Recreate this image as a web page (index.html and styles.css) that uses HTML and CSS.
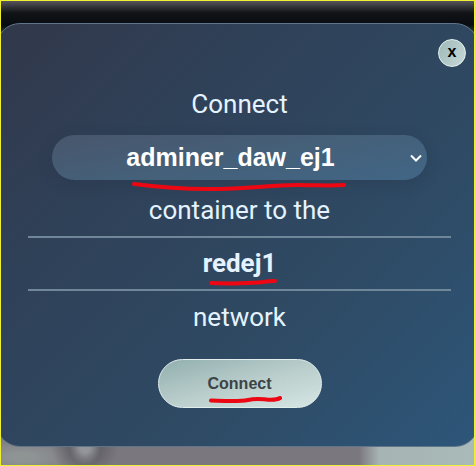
FILE: index.html
```html
<!DOCTYPE html>
<html lang="en">
<head>
<meta charset="utf-8">
<meta name="viewport" content="width=device-width, initial-scale=1">
<title>Connect container</title>
<link rel="stylesheet" href="styles.css">
</head>
<body>
<div class="page">
  <form class="modal" role="dialog" aria-label="Connect container to network">
    <button class="close" type="button" aria-label="Close">x</button>
    <label class="row" for="container">Connect</label>
    <div class="picker">
      <select class="select" id="container">
        <option>adminer_daw_ej1</option>
      </select>
      <svg class="chevron" viewBox="0 0 12 8"><path d="M1 1.5 6 6.5 11 1.5"/></svg>
      <svg class="mark mark-select" viewBox="0 0 214 10"><path d="M2 2C25 5 48 7 76 7C120 7 135 3 165 3C185 3 195 4 212 3"/></svg>
    </div>
    <p class="row">container to the</p>
    <p class="row network">redej1
      <svg class="mark mark-network" viewBox="0 0 68 8"><path d="M2 5C20 6 45 5 54 4C60 3 62 3 66 3"/></svg>
    </p>
    <p class="row">network</p>
    <div class="actions">
      <button class="submit" type="submit">Connect</button>
      <svg class="mark mark-submit" viewBox="0 0 73 8"><path d="M2 4.500C16 5 30 6 39 4C46 2.500 50 3 57 3.500C64 4 68 4 71 2"/></svg>
    </div>
  </form>
</div>
</body>
</html>
```
FILE: styles.css
```css
* {
  box-sizing: border-box;
}

body {
  margin: 0;
  font-family: Roboto, "Liberation Sans", sans-serif;
}

.page {
  min-height: 100vh;
  padding-top: 22px;
  overflow: hidden;
  border: 1px solid #f0f032;
  background:
    linear-gradient(#55555a, #111316 12px, #080c11 24px, transparent 50px) top / 100% 60px no-repeat,
    radial-gradient(ellipse 16px 18px at 84px 446px, #94959a 30%, transparent),
    radial-gradient(ellipse 34px 32px at 84px 444px, #626067 40%, transparent),
    radial-gradient(ellipse 70px 22px at 20px 456px, #8e9394 20%, transparent),
    linear-gradient(90deg, #7b777e 358px, #a6b4b3 378px, #a9bab8);
}

.modal {
  position: relative;
  display: flex;
  flex-direction: column;
  align-items: center;
  margin: 0 -5px;
  padding: 54px 27px 38px 31px;
  border: 1px solid #60758a;
  border-radius: 24px;
  background: linear-gradient(135deg, #32384a, #2f4158 30%, #2f4a64 65%, #2d5679);
  color: #e4f3ff;
}

.close {
  position: absolute;
  top: 15px;
  right: 12px;
  width: 28px;
  height: 28px;
  padding: 0 0 3px;
  border: 1px solid #e6f3f1;
  border-radius: 50%;
  background: linear-gradient(120deg, #9db8b8, #c8d9d8);
  color: #000;
  font: bold 16px "Liberation Sans", sans-serif;
}

.row {
  width: 100%;
  margin: 0;
  font-size: 26px;
  line-height: 52px;
  text-align: center;
}

.picker {
  position: relative;
  width: calc(100% - 48px);
  margin: 5px 0 4px;
}

.select {
  display: block;
  width: 100%;
  height: 45px;
  padding: 0 34px 2px 16px;
  appearance: none;
  border: 0;
  border-radius: 23px;
  background: linear-gradient(170deg, #48566c, #456079 50%, #416686);
  box-shadow: 0 4px 14px #2331454d;
  color: #fff;
  font: bold 25px "Liberation Sans", sans-serif;
  text-align: center;
  text-align-last: center;
}

.chevron {
  position: absolute;
  top: 19px;
  right: 5px;
  width: 12px;
  height: 8px;
  fill: none;
  stroke: #fff;
  stroke-width: 2;
  pointer-events: none;
}

.network {
  position: relative;
  border: solid #708799;
  border-width: 2px 0;
  font-weight: bold;
  line-height: 51px;
}

.actions {
  position: relative;
  margin-top: 16px;
}

.submit {
  display: block;
  width: 164px;
  height: 49px;
  border: 1px solid #e1eeec;
  border-radius: 25px;
  background: linear-gradient(165deg, #91afaf, #b9cdcb 50%, #d5e5e3);
  color: #3b4447;
  font: bold 16px "Liberation Sans", sans-serif;
}

.mark {
  position: absolute;
  fill: none;
  stroke: #ed0712;
  stroke-width: 4;
  stroke-linecap: round;
  stroke-linejoin: round;
  pointer-events: none;
}

.mark-select {
  top: 47px;
  left: 80px;
  width: 214px;
  height: 10px;
}

.mark-network {
  top: 40px;
  left: calc(50% - 31px);
  width: 68px;
  height: 8px;
}

.mark-submit {
  top: 37px;
  left: 51px;
  width: 73px;
  height: 8px;
}
```
